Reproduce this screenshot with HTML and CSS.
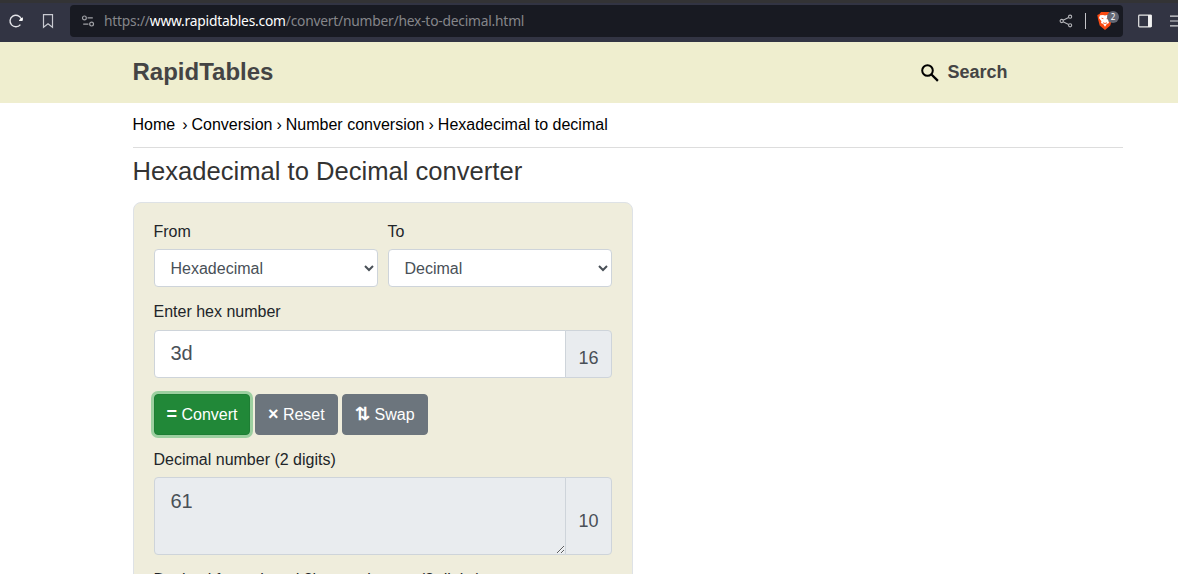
FILE: index.html
```
<!DOCTYPE html>
<html lang="en">
<head>
<meta charset="utf-8">
<title>Hexadecimal to Decimal converter</title>
<link rel="stylesheet" href="styles.css">
</head>
<body>
<div class="toolbar">
  <svg class="reload" width="16" height="16" viewBox="0 0 16 16"><path d="M12.4 11.6A5.8 5.8 0 1 1 13.2 5.8" fill="none" stroke="#e4e4e8" stroke-width="1.4"/><path d="M14.3 4.8v2.6h-3z" fill="#fff" stroke="#fff" stroke-width="1"/></svg>
  <svg class="bookmark" width="12" height="16" viewBox="0 0 12 16"><path d="M1.5 1.6h9v12.6L6 10.7l-4.5 3.5z" fill="none" stroke="#c9cad1" stroke-width="1.2"/></svg>
  <div class="address">
    <svg class="tune" width="14" height="14" viewBox="0 0 14 14" fill="none" stroke="#a0a1a6" stroke-width="1.2"><circle cx="3.4" cy="3.9" r="1.9"/><path d="M6.6 3.9h5.2M2.2 10.1h5.2"/><circle cx="10.6" cy="10.1" r="1.9"/></svg>
    <span class="url">https://<b>www.rapidtables.com</b>/convert/number/hex-to-decimal.html</span>
    <svg class="share" width="14" height="14" viewBox="0 0 14 14" fill="none" stroke="#b5b6ba" stroke-width="1.1"><path d="M4.1 6.2L9.6 3.4M4.1 7.8l5.5 2.8"/><circle cx="2.7" cy="7" r="1.6"/><circle cx="11.1" cy="2.7" r="1.6"/><circle cx="11.1" cy="11.3" r="1.6"/></svg>
    <span class="divider"></span>
    <span class="shield">
      <svg width="16" height="18" viewBox="0 0 16 18"><path d="M4 0h8l1.5 2L15.5 3l-.5 4-1.7 6.4L8 18l-5.3-4.6L1 7 .3 3 2.5 2z" fill="#fa4a12"/><path d="M3 3.3L6 2.9l2 .7 2-.7 3 .4 1 2.7-2.4 3.3.4 1.8-2.2 1L8 14.8l-1.8-2.7-2.2-1 .4-1.8L2 6z" fill="#fff"/><path d="M4.6 6.2l1.8.5M11.4 6.2l-1.8.5M6 10.8l2 .7 2-.7" fill="none" stroke="#fa4a12" stroke-width=".9"/></svg>
      <span class="badge">2</span>
    </span>
  </div>
  <svg class="sidebar" width="14" height="14" viewBox="0 0 14 14"><rect x=".7" y="1.2" width="12.6" height="11.6" rx=".8" fill="none" stroke="#e6e6e6" stroke-width="1.2"/><path d="M10 1h3.6v12H10z" fill="#f2f2f2"/></svg>
  <svg class="menu" width="14" height="12" viewBox="0 0 14 12"><path d="M0 1.2h14M0 6h14M0 10.8h14" stroke="#d8d8dc" stroke-width="1.2"/></svg>
</div>
<header class="site-header">
  <span class="brand">RapidTables</span>
  <span class="search"><svg width="18" height="18" viewBox="0 0 18 18" fill="none" stroke="#000"><circle cx="6.5" cy="6.5" r="5.3" stroke-width="2"/><path d="M10.5 10.5l6.4 6.4" stroke-width="2.3"/></svg><span class="search-text">Search</span></span>
</header>
<main class="page">
  <nav class="crumbs"><a class="home">Home</a><i>›</i><a>Conversion</a><i>›</i><a>Number conversion</a><i>›</i><a>Hexadecimal to decimal</a></nav>
  <h1>Hexadecimal to Decimal converter</h1>
  <form class="panel">
    <div class="pair">
      <div><label>From</label><select class="control"><option>Hexadecimal</option></select></div>
      <div><label>To</label><select class="control"><option>Decimal</option></select></div>
    </div>
    <label class="number-label">Enter hex number</label>
    <div class="group input-group"><input class="field" type="text" value="3d"><span class="base">16</span></div>
    <div class="buttons">
      <button type="button" class="btn convert"><span class="sign">=</span> Convert</button>
      <button type="button" class="btn"><span class="sign">×</span> Reset</button>
      <button type="button" class="btn"><span class="sign">⇅</span> Swap</button>
    </div>
    <label>Decimal number (2 digits)</label>
    <div class="group result-group"><textarea class="field" readonly>61</textarea><span class="base">10</span></div>
    <label class="signed-label">Decimal from signed 2's complement (2 digits)</label>
  </form>
</main>
</body>
</html>
```
FILE: styles.css
```
* { box-sizing: border-box; }
html, body { height: 100%; }
body { margin: 0; overflow: hidden; background: #fff; color: #212529; font: 16px/24px "Liberation Sans", Arial, sans-serif; }
svg { display: block; flex: none; }

.toolbar { height: 42px; width: 1184px; padding: 0 0 3px 8px; display: flex; align-items: center; background: #323443; border-top: 3px solid #333335; }
.bookmark { margin-left: 18px; }
.address { width: 1053px; height: 32px; margin-left: 16px; padding: 0 4px 0 11px; display: flex; align-items: center; flex: none; background: #181a22; border-radius: 4px; }
.url { margin-left: 9px; flex: 1; color: #85868a; font: 13.8px/20px "Noto Sans", sans-serif; letter-spacing: -0.22px; white-space: nowrap; }
.url b { color: #fff; font-weight: 400; }
.divider { width: 1px; height: 16px; margin: 0 11px 0 12px; background: #c4c4c8; }
.shield { position: relative; width: 22px; }
.badge { position: absolute; top: -1px; left: 10px; width: 12px; height: 12px; border-radius: 6px; background: #636773; color: #fff; font: 8px/12px "Noto Sans", sans-serif; text-align: center; }
.sidebar { margin-left: 15px; }
.menu { margin-left: 18px; }

.site-header { height: 61px; padding: 0 170.5px 0 132.5px; display: flex; align-items: center; justify-content: space-between; background: #efeecf; color: #444; font-weight: 700; }
.brand { padding-bottom: 2px; font-size: 24px; }
.search { display: flex; align-items: center; gap: 8.4px; font-size: 18px; }
.search-text { padding-bottom: 2px; }

.page { width: 1123px; padding-left: 132.5px; }
.crumbs { height: 45px; padding-top: 10px; display: flex; border-bottom: 1px solid #ddd; color: #000; white-space: nowrap; }
.crumbs i { margin: 0 4px; font-style: normal; }
.home { margin-right: 3px; }
h1 { margin: 8px 0 15px; color: #333; font-size: 25.6px; line-height: 31px; font-weight: 400; }

.panel { width: 500px; height: 500px; padding: 17px 20px; background: #efeddc; border: 1px solid #dee2e6; border-radius: 8px; }
.pair { display: grid; grid-template-columns: 1fr 1fr; gap: 10px; }
label { display: block; }
.control { display: block; width: 100%; height: 38px; margin-top: 5px; padding: 6px 0 6px 12px; color: #495057; background: #fff; border: 1px solid #ced4da; border-radius: 4px; font: 16px/24px "Liberation Sans", Arial, sans-serif; }
.number-label { margin-top: 13px; }
.group { display: flex; }
.input-group { height: 48px; margin-top: 6px; }
.result-group { height: 78px; margin-top: 5px; }
.field { flex: 1; min-width: 0; margin: 0; padding: 8px 16px; color: #495057; background: #fff; border: 1px solid #ced4da; border-radius: 4px 0 0 4px; font: 20px/30px "Liberation Sans", Arial, sans-serif; }
input.field { padding: 7px 16px 9px; }
textarea.field { background: #e9ecef; resize: vertical; }
.base { width: 47px; margin-left: -1px; padding: 8px 0 0 1px; display: flex; align-items: center; justify-content: center; color: #495057; background: #e9ecef; border: 1px solid #ced4da; border-radius: 0 4px 4px 0; font-size: 18px; }
.result-group .base { padding-top: 10px; }
.buttons { margin: 16px 0 13px; display: flex; gap: 4.45px; }
.btn { height: 41px; padding: 0 12px; border: 1px solid #6c757d; border-radius: 4px; color: #fff; background: #6c757d; font: 16px/24px "Liberation Sans", Arial, sans-serif; white-space: nowrap; }
.sign { font-size: 18px; font-weight: 700; }
.convert { background: #218838; border-color: #1e7e34; box-shadow: 0 0 0 3px #9cd0a0; }
.signed-label { margin-top: 13px; }
```
